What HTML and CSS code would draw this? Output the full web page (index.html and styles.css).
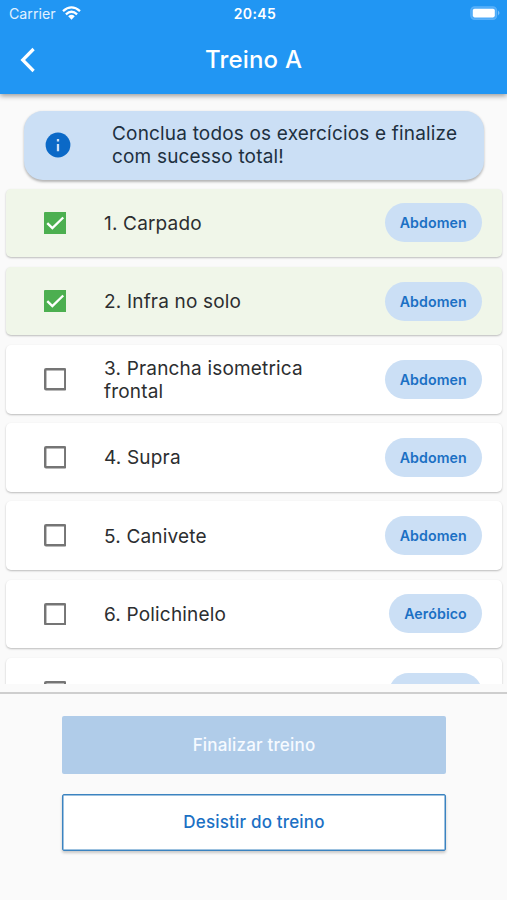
FILE: index.html
```html
<!DOCTYPE html>
<html lang="pt">
<head>
<meta charset="utf-8">
<title>Treino A</title>
<link rel="stylesheet" href="styles.css">
</head>
<body>
<div class="app">
  <header class="top">
    <div class="status">
      <div class="carrier"><span>Carrier</span>
        <svg width="19" height="14" viewBox="0 0 19 14"><g fill="none" stroke="#fff" stroke-width="2.3"><path d="M1 5.2Q9.5-2.4 18 5.2"/><path d="M3.9 8.3Q9.5 3.2 15.1 8.3"/></g><path d="M6.2 10.3Q9.5 7.4 12.8 10.3L9.5 13.7Z" fill="#fff"/></svg>
      </div>
      <div class="time">20:45</div>
      <div class="power">
        <svg width="31" height="14" viewBox="0 0 31 14"><rect x=".8" y=".8" width="25.8" height="12.6" rx="3.8" fill="#4eabf8" stroke="#5ab1f9" stroke-width="1.2"/><rect x="2.8" y="2.8" width="22" height="8.6" rx="1.8" fill="#fff"/><path d="M28 4.6Q31 7 28 9.4Z" fill="#79c0fa"/></svg>
      </div>
    </div>
    <div class="bar">
      <svg class="back" width="16" height="26" viewBox="0 0 16 26"><path d="M13.6 2 2.7 13 13.6 24" fill="none" stroke="#fff" stroke-width="3.2"/></svg>
      <h1>Treino A</h1>
    </div>
  </header>
  <main class="content">
    <section class="info">
      <svg width="26" height="26" viewBox="0 0 26 26"><circle cx="13" cy="13" r="12.4" fill="#0b69c7"/><path d="M13 12v7.2M13 7v2.4" stroke="#cbdff5" stroke-width="2.3"/></svg>
      <p>Conclua todos os exercícios e finalize<br>com sucesso total!</p>
    </section>
    <ul class="list">
      <li class="card done"><svg class="check" viewBox="0 0 22 22"><rect width="22" height="22" rx="1" fill="#4caf50"/><path d="M3.2 10.8 8.2 15.8 18.8 5.4" fill="none" stroke="#fff" stroke-width="2.3"/></svg><span class="name">1. Carpado</span><span class="tag">Abdomen</span></li>
      <li class="card done"><svg class="check" viewBox="0 0 22 22"><rect width="22" height="22" rx="1" fill="#4caf50"/><path d="M3.2 10.8 8.2 15.8 18.8 5.4" fill="none" stroke="#fff" stroke-width="2.3"/></svg><span class="name">2. Infra no solo</span><span class="tag">Abdomen</span></li>
      <li class="card"><svg class="check" viewBox="0 0 22 22"><rect x="1.2" y="1.2" width="19.6" height="19.6" rx=".8" fill="none" stroke="#757575" stroke-width="2.4"/></svg><span class="name">3. Prancha isometrica<br>frontal</span><span class="tag">Abdomen</span></li>
      <li class="card"><svg class="check" viewBox="0 0 22 22"><rect x="1.2" y="1.2" width="19.6" height="19.6" rx=".8" fill="none" stroke="#757575" stroke-width="2.4"/></svg><span class="name">4. Supra</span><span class="tag">Abdomen</span></li>
      <li class="card"><svg class="check" viewBox="0 0 22 22"><rect x="1.2" y="1.2" width="19.6" height="19.6" rx=".8" fill="none" stroke="#757575" stroke-width="2.4"/></svg><span class="name">5. Canivete</span><span class="tag">Abdomen</span></li>
      <li class="card"><svg class="check" viewBox="0 0 22 22"><rect x="1.2" y="1.2" width="19.6" height="19.6" rx=".8" fill="none" stroke="#757575" stroke-width="2.4"/></svg><span class="name">6. Polichinelo</span><span class="tag aero">Aeróbico</span></li>
      <li class="card"><svg class="check" viewBox="0 0 22 22"><rect x="1.2" y="1.2" width="19.6" height="19.6" rx=".8" fill="none" stroke="#757575" stroke-width="2.4"/></svg><span class="name"></span><span class="tag aero"></span></li>
    </ul>
  </main>
  <footer class="actions">
    <button class="btn finish">Finalizar treino</button>
    <button class="btn quit">Desistir do treino</button>
  </footer>
</div>
</body>
</html>
```
FILE: styles.css
```css
* { box-sizing: border-box; }
body { margin: 0; background: #fafafa; font-family: Inter, "Liberation Sans", sans-serif; color: #2c2e30; }
svg { display: block; flex: none; }
.app { height: 900px; display: flex; flex-direction: column; overflow: hidden; }
.top { height: 94px; flex: none; background: #2196f3; color: #fff; box-shadow: 0 2px 5px rgba(0,0,0,.38); z-index: 1; }
.status { height: 26px; display: grid; grid-template-columns: 1fr auto 1fr; align-items: center; padding: 0 6px 0 9px; }
.carrier { display: flex; align-items: center; gap: 5px; font-size: 14.2px; color: #e0f1ff; }
.carrier span { width: 48px; padding-top: 1px; }
.time { font-size: 14px; font-weight: 600; letter-spacing: .4px; padding-top: 1px; }
.power { display: flex; justify-content: flex-end; }
.bar { height: 67px; display: grid; grid-template-columns: 60px 1fr 60px; align-items: center; }
.back { margin-left: 20px; }
h1 { margin: 0; text-align: center; font-size: 24px; font-weight: 500; letter-spacing: .2px; }
.content { height: 590px; flex: none; overflow: hidden; padding-top: 17px; }
.info { margin: 0 23px 0 24px; height: 68.5px; border-radius: 19px; background: #cbdff5; box-shadow: 0 1.5px 2.5px rgba(0,0,0,.28); display: flex; align-items: center; padding-left: 21px; gap: 41px; color: #20303f; }
.info p { margin: 0; font-size: 19px; line-height: 23.3px; letter-spacing: .18px; white-space: nowrap; }
.list { margin: 9.2px 5px 0 6px; padding: 0; list-style: none; display: flex; flex-direction: column; gap: 9.7px; }
.card { height: 68.5px; flex: none; border-radius: 5px; background: #fff; box-shadow: 0 1px 2px rgba(0,0,0,.25); display: flex; align-items: center; padding: 0 20px 0 37.5px; }
.done { background: #f0f6e9; }
.check { width: 22.5px; height: 22.5px; flex: none; }
.name { flex: 1; margin-left: 38px; padding-top: 1px; font-size: 19px; line-height: 23.3px; letter-spacing: .18px; white-space: nowrap; }
.tag { width: 97.5px; height: 39px; border-radius: 20px; background: #cbdff5; color: #1b70c4; display: flex; align-items: center; justify-content: center; font-size: 14.2px; font-weight: 600; letter-spacing: .1px; }
.aero { width: 93px; }
.actions { flex: 1; margin-top: 8px; border-top: 2px solid #cecece; padding: 22px 61px 0 62px; display: flex; flex-direction: column; gap: 20px; }
.btn { height: 57.5px; flex: none; border-radius: 2px; padding: 0; font: 500 17px Inter, sans-serif; letter-spacing: .18px; }
.finish { border: 0; background: #b0cce9; color: #f6faff; }
.quit { border: 1px solid #3b83c0; background: #fff; color: #1b70c4; box-shadow: inset 0 0 0 .5px #3b83c0, 0 2px 3px rgba(0,0,0,.2); }
```
